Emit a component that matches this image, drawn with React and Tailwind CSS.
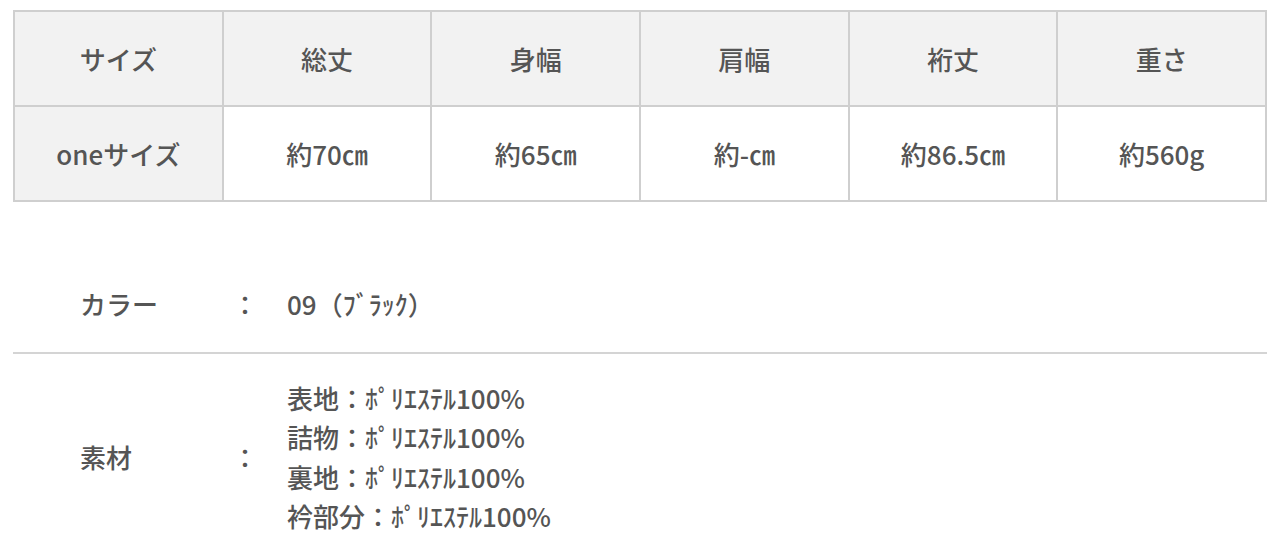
import React from 'react'

const heads = ['サイズ', '総丈', '身幅', '肩幅', '裄丈', '重さ']
const values = ['oneサイズ', '約70㎝', '約65㎝', '約-㎝', '約86.5㎝', '約560g']

const materials = [
    '表地：ﾎﾟﾘｴｽﾃﾙ100%',
    '詰物：ﾎﾟﾘｴｽﾃﾙ100%',
    '裏地：ﾎﾟﾘｴｽﾃﾙ100%',
    '衿部分：ﾎﾟﾘｴｽﾃﾙ100%',
]

const App = () => {
    return (
        <main className="min-h-screen bg-white text-[#555] font-['Noto_Sans_CJK_JP','Noto_Sans',sans-serif] font-medium text-[26px] px-[13px] pt-[10px]">
            {/* size table */}
            <table className="w-full table-fixed border-collapse">
                <tbody>
                    <tr>
                        {heads.map((h) => (
                            <th key={h} className="h-[95px] border-2 border-[#cfcfcf] bg-[#f2f2f2] text-center font-medium">
                                {h}
                            </th>
                        ))}
                    </tr>
                    <tr>
                        {values.map((v, i) => (
                            <td key={v} className={`h-[95px] border-2 border-[#cfcfcf] text-center ${i === 0 ? 'bg-[#f2f2f2]' : 'bg-white'}`}>
                                {v}
                            </td>
                        ))}
                    </tr>
                </tbody>
            </table>

            {/* spec list */}
            <div className="mt-[82px] leading-[39.5px]">
                <div className="flex items-center pb-[28px] border-b-2 border-[#d4d4d4]">
                    <div className="w-[219px] pl-[67px]">カラー</div>
                    <div className="w-[55px]">：</div>
                    <div>09（ﾌﾞﾗｯｸ）</div>
                </div>
                <div className="flex items-center pt-[24px]">
                    <div className="w-[219px] pl-[67px]">素材</div>
                    <div className="w-[55px]">：</div>
                    <div>
                        {materials.map((m) => (
                            <div key={m}>{m}</div>
                        ))}
                    </div>
                </div>
            </div>
        </main>
    )
}

export default App
